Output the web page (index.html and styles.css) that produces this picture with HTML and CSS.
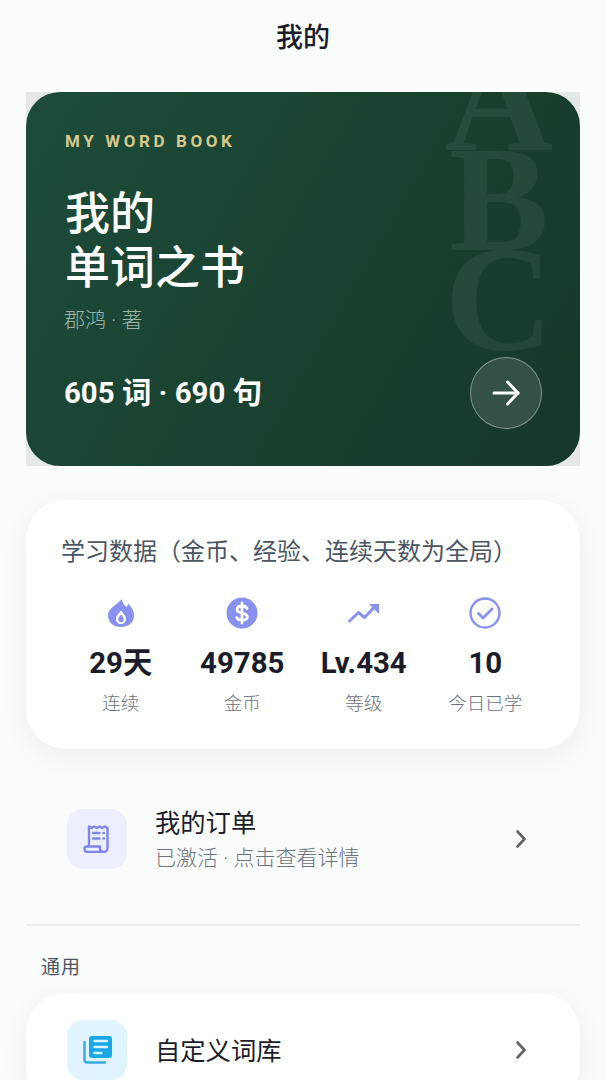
FILE: index.html
```html
<!DOCTYPE html>
<html lang="zh-CN">
<head>
    <meta charset="UTF-8">
    <meta name="viewport" content="width=device-width, initial-scale=1.0">
    <title>我的</title>
    <link rel="stylesheet" href="styles.css">
</head>
<body>
    <div class="page">
        <h1 class="page-title">我的</h1>

        <!-- book card -->
        <div class="book-wrap">
            <div class="book">
                <div class="book-letters"><span>A</span><span>B</span><span>C</span></div>
                <div class="book-tag">MY WORD BOOK</div>
                <div class="book-title">我的<br>单词之书</div>
                <div class="book-author">郡鸿 · 著</div>
                <div class="book-foot">
                    <div class="book-count">605 词 · 690 句</div>
                    <div class="book-btn">
                        <svg width="30" height="30" viewBox="0 0 30 30" fill="none" stroke="#fff" stroke-width="3" stroke-linecap="round" stroke-linejoin="round"><path d="M3 15H27"/><path d="M16.5 4L27 15L16.5 26"/></svg>
                    </div>
                </div>
            </div>
        </div>

        <!-- stats -->
        <div class="card stats">
            <div class="stats-title">学习数据（金币、经验、连续天数为全局）</div>
            <div class="stats-grid">
                <div class="stat">
                    <svg class="stat-icon" viewBox="0 0 32 32"><path fill="#8891f0" fill-rule="evenodd" d="M16.500 2C17.500 6.500 20 8.500 21.500 10C22.500 9 23 8 23 6.500C26.500 10 29 13.500 29 18.500C29 25.500 23.500 30 16 30C8.500 30 3 25.500 3 18.500C3 12 9 9.500 12 6.500C13.800 5 15.500 3.800 16.500 2ZM16 13.500C14 16.500 11 18.500 11 22C11 25 13.200 27 16 27C18.800 27 21 25 21 22C21 18.500 18 16.500 16 13.500Z"/><path fill="#8891f0" d="M16 17.500C14.800 19.300 13.200 20.600 13.200 22.500C13.200 24.100 14.400 25.200 16 25.200C17.600 25.200 18.800 24.100 18.800 22.500C18.800 20.600 17.200 19.300 16 17.500Z"/></svg>
                    <div class="stat-value">29天</div>
                    <div class="stat-label">连续</div>
                </div>
                <div class="stat">
                    <svg class="stat-icon" viewBox="0 0 32 32"><circle cx="16" cy="16" r="15.500" fill="#8891f0"/><path fill="none" stroke="#fff" stroke-width="2.800" stroke-linecap="round" d="M21 11.500C20.300 9.800 18.400 9 16 9C13.200 9 11 10.300 11 12.500C11 17.500 21.300 14.500 21.300 19.800C21.300 22 19 23.200 16 23.200C13.400 23.200 11.400 22.300 10.700 20.500M16 6V26"/></svg>
                    <div class="stat-value">49785</div>
                    <div class="stat-label">金币</div>
                </div>
                <div class="stat">
                    <svg class="stat-icon" viewBox="0 0 32 32" fill="none"><path stroke="#8891f0" stroke-width="3" stroke-linecap="round" stroke-linejoin="round" d="M1.500 24L10.500 15.500L16.500 20.500L26 10.500"/><path fill="#8891f0" d="M21 7H31V17Z"/></svg>
                    <div class="stat-value">Lv.434</div>
                    <div class="stat-label">等级</div>
                </div>
                <div class="stat">
                    <svg class="stat-icon" viewBox="0 0 32 32" fill="none" stroke="#8891f0" stroke-linecap="round" stroke-linejoin="round"><circle cx="16" cy="16" r="14.500" stroke-width="2.400"/><path stroke-width="2.800" d="M9.500 16.500L14 21L23 12"/></svg>
                    <div class="stat-value">10</div>
                    <div class="stat-label">今日已学</div>
                </div>
            </div>
        </div>

        <!-- orders -->
        <div class="row row-order">
            <div class="row-icon icon-order">
                <svg width="28" height="28" viewBox="0 0 28 28" fill="none" stroke="#7f88e8" stroke-width="2.400" stroke-linejoin="round" stroke-linecap="round"><path d="M6 21V1.500L8.600 3L11.200 1.500L13.800 3L16.400 1.500L19 3L21.600 1.500L24.500 3V22.500C24.500 25 23 27 21 27"/><path d="M4 21.500H17V24C17 26 19 27 21 27H4C2.500 27 1.500 25.500 1.500 24C1.500 22.500 2.500 21.500 4 21.500Z"/><path stroke-width="2.400" d="M10 8H16.500M10 13.500H16.500M20.500 8H21M20.500 13.500H21"/></svg>
            </div>
            <div class="row-text">
                <div class="row-name">我的订单</div>
                <div class="row-sub">已激活 · 点击查看详情</div>
            </div>
            <svg class="row-arrow" width="14" height="20" viewBox="0 0 14 20" fill="none" stroke="#5f6368" stroke-width="2.600" stroke-linecap="round" stroke-linejoin="round"><path d="M3.500 2.500L10.500 10L3.500 17.500"/></svg>
        </div>

        <div class="divider"></div>
        <div class="section-label">通用</div>

        <div class="card list">
            <div class="row">
                <div class="row-icon icon-lib">
                    <svg width="30" height="30" viewBox="0 0 30 30"><path fill="none" stroke="#3aa9dc" stroke-width="2.400" stroke-linecap="round" d="M2.500 7V24.500C2.500 26.500 3.500 27.500 5.500 27.500H23"/><rect x="7" y="1" width="23" height="22" rx="3" fill="#19a7e8"/><path fill="none" stroke="#d9f2fd" stroke-width="2.400" stroke-linecap="round" d="M12.500 6H25M12.500 12H25M12.500 18H19.500"/></svg>
                </div>
                <div class="row-text">
                    <div class="row-name">自定义词库</div>
                </div>
                <svg class="row-arrow" width="14" height="20" viewBox="0 0 14 20" fill="none" stroke="#5f6368" stroke-width="2.600" stroke-linecap="round" stroke-linejoin="round"><path d="M3.500 2.500L10.500 10L3.500 17.500"/></svg>
            </div>
        </div>
    </div>
</body>
</html>
```

FILE: styles.css
```css
html, body {
    margin: 0;
    padding: 0;
}
body {
    font-family: Roboto, "Noto Sans CJK SC", sans-serif;
    background-color: #fafbfb;
    color: #1a1d29;
    height: 1080px;
    overflow: hidden;
}
.page {
    padding: 0 27px 0 26px;
}
.page-title {
    margin: 0;
    height: 92px;
    padding-top: 20px;
    box-sizing: border-box;
    text-align: center;
    font-size: 27px;
    line-height: 36px;
    font-weight: 500;
    color: #1a1d29;
}

/* book card */
.book-wrap {
    height: 374px;
    background-color: #e4e8e6;
}
.book {
    position: relative;
    overflow: hidden;
    box-sizing: border-box;
    height: 374px;
    padding: 37px 38px 0 39px;
    border-radius: 34px;
    background: linear-gradient(120deg, #1d4c3a 0%, #193f2f 60%, #16382a 100%);
    color: #fff;
}
.book-letters {
    position: absolute;
    top: -43px;
    right: 26px;
    width: 110px;
    display: flex;
    flex-direction: column;
    align-items: center;
    font-family: "Liberation Serif", serif;
    font-weight: 700;
    font-size: 150px;
    line-height: 100px;
    color: rgba(255, 255, 255, 0.06);
}
.book-tag {
    position: relative;
    font-size: 17px;
    line-height: 24px;
    font-weight: 700;
    letter-spacing: 3.600px;
    color: #d8c88c;
}
.book-title {
    position: relative;
    margin-top: 35px;
    font-size: 45px;
    line-height: 54px;
    font-weight: 500;
}
.book-author {
    position: relative;
    margin-top: 9px;
    margin-left: -1px;
    font-size: 21px;
    line-height: 30px;
    font-weight: 300;
    color: #9db5a9;
}
.book-foot {
    position: relative;
    margin-top: 22px;
    margin-left: -1px;
    display: flex;
    align-items: center;
    justify-content: space-between;
}
.book-count {
    font-size: 29.400px;
    line-height: 40px;
    font-weight: 700;
}
.book-btn {
    width: 70px;
    height: 70px;
    border-radius: 50%;
    border: 1.500px solid rgba(255, 255, 255, 0.38);
    background-color: rgba(255, 255, 255, 0.12);
    display: flex;
    align-items: center;
    justify-content: center;
}

/* cards */
.card {
    background-color: #fff;
    border-radius: 40px;
    box-shadow: 0 8px 28px rgba(30, 40, 60, 0.06);
}
.stats {
    margin-top: 34px;
    height: 249px;
    box-sizing: border-box;
    padding: 35px 0 0 35px;
}
.stats-title {
    font-size: 24px;
    line-height: 34px;
    color: #4b5563;
}
.stats-grid {
    margin-top: 28px;
    margin-left: -1px;
    width: 486px;
    display: grid;
    grid-template-columns: repeat(4, 1fr);
}
.stat {
    display: flex;
    flex-direction: column;
    align-items: center;
}
.stat-icon {
    width: 32px;
    height: 32px;
}
.stat-value {
    margin-top: 14px;
    font-size: 29.400px;
    line-height: 40px;
    font-weight: 700;
    color: #1a1d29;
}
.stat-label {
    margin-top: 7px;
    font-size: 18.500px;
    line-height: 28px;
    font-weight: 300;
    color: #6b7280;
}

/* rows */
.row {
    display: flex;
    align-items: center;
    padding: 27px 52px 26px 41px;
}
.row-order {
    margin-top: 30px;
    padding-top: 25px;
    padding-bottom: 24px;
}
.row-icon {
    flex: none;
    width: 60px;
    height: 60px;
    border-radius: 16px;
    display: flex;
    align-items: center;
    justify-content: center;
}
.icon-order {
    background-color: #eeeffc;
}
.icon-lib {
    background-color: #e0f4fd;
}
.row-text {
    flex: 1;
    margin-left: 28px;
    padding-top: 2px;
}
.list .row-text {
    padding-top: 4px;
}
.row-name {
    font-size: 25.300px;
    line-height: 36px;
    color: #1a1d29;
}
.row-sub {
    margin-top: 1px;
    font-size: 21px;
    line-height: 30px;
    font-weight: 300;
    color: #6b7280;
}
.divider {
    margin-top: 27px;
    height: 2px;
    background-color: #eceeee;
}
.section-label {
    margin-top: 29px;
    margin-left: 15px;
    font-size: 19px;
    line-height: 26px;
    letter-spacing: 1px;
    color: #4b5563;
}
.list {
    margin-top: 12px;
}
```
